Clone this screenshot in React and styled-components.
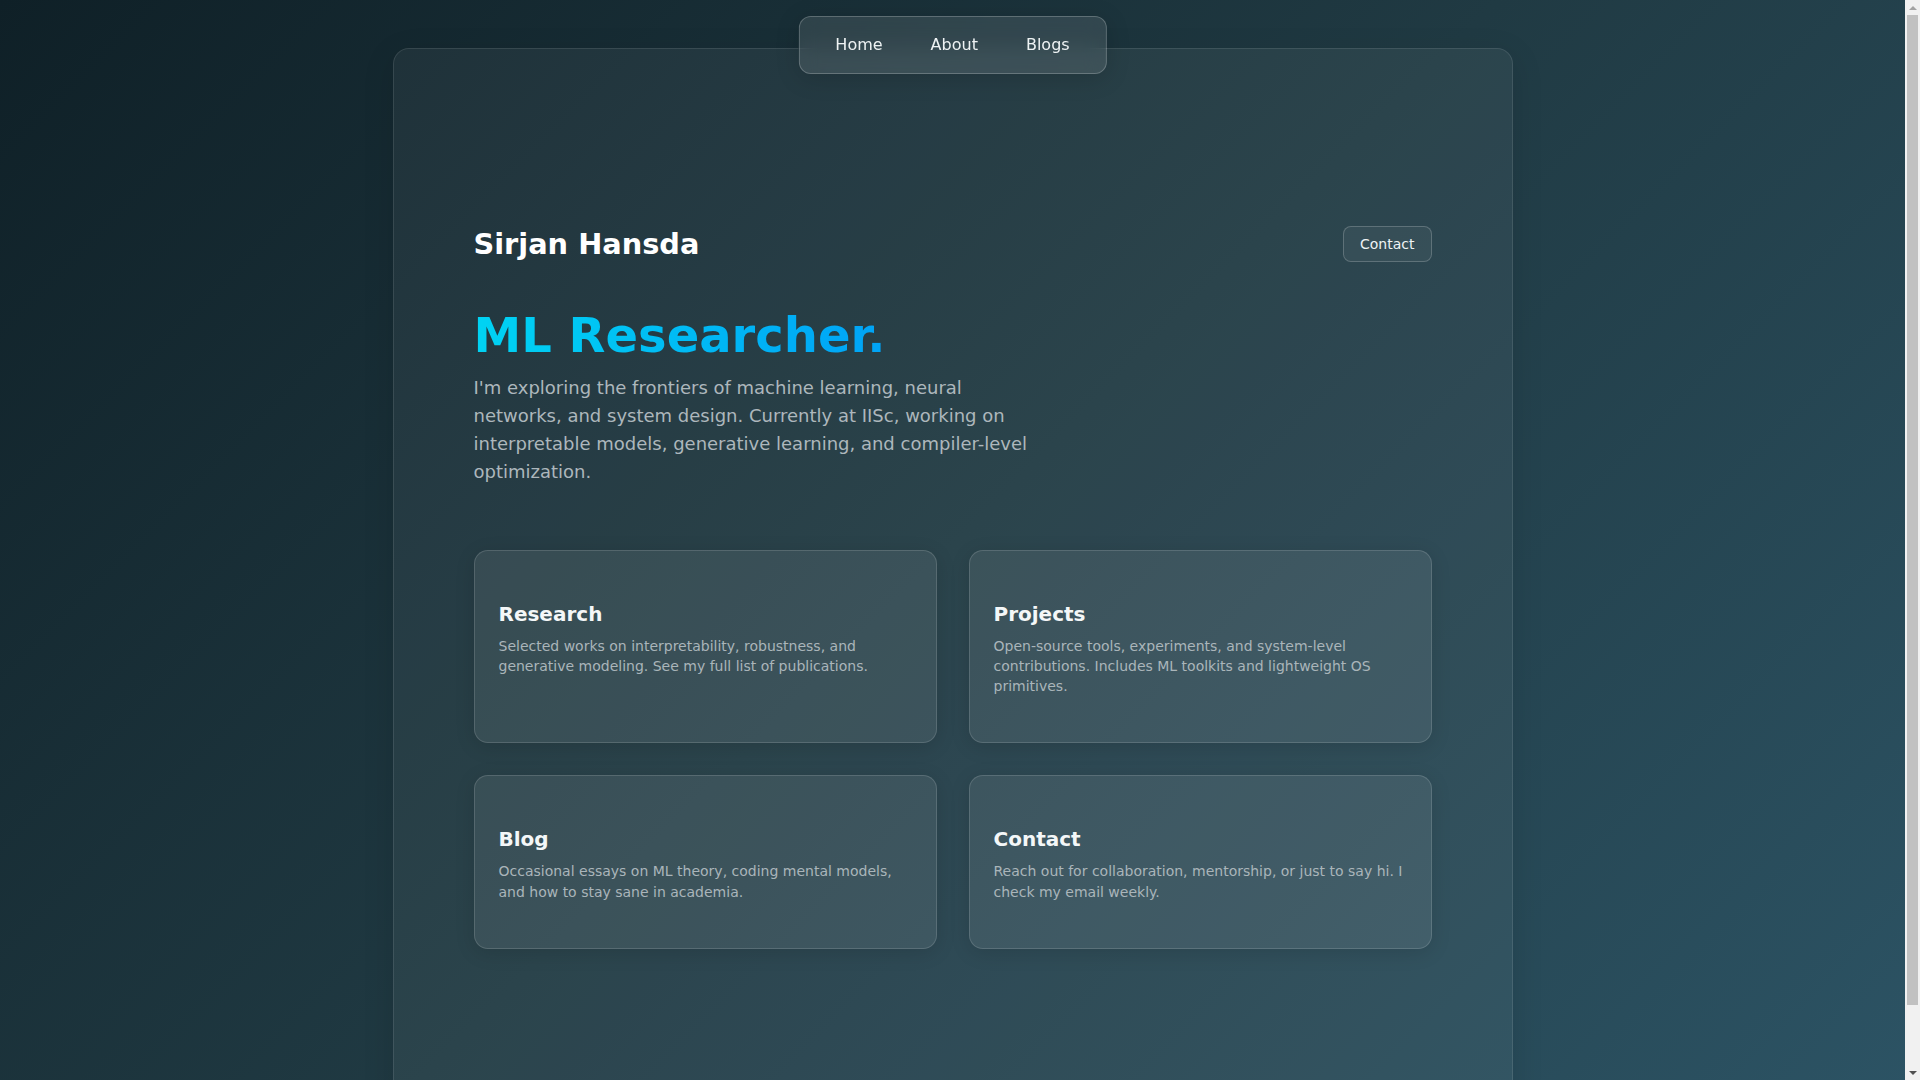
import React from "react";
import styled, { createGlobalStyle } from "styled-components";

const GlobalStyle = createGlobalStyle`
  html, body {
    margin: 0;
    padding: 0;
    height: 100%;
    overflow: hidden;
  }
  html {
    background: linear-gradient(135deg, #0f2027 0%, #203a43 50%, #2c5364 100%);
  }
  body {
    font-family: "DejaVu Sans", "Noto Sans", sans-serif;
    color: #ffffff;
  }
  * { box-sizing: border-box; }
`;

const Viewport = styled.div`
  display: flex;
  height: 100vh;
`;

const Scroller = styled.div`
  flex: 1;
  min-width: 0;
  height: 100vh;
  overflow-y: auto;
  scrollbar-width: none;
  &::-webkit-scrollbar { display: none; }
`;

const ScrollTrack = styled.div`
  width: 15px;
  flex: none;
  display: flex;
  flex-direction: column;
  align-items: center;
  background: #f1f1f1;
`;

const ScrollArrow = styled.div`
  height: 15px;
  width: 15px;
  display: flex;
  align-items: center;
  justify-content: center;
  &::before {
    content: "";
    width: 0;
    height: 0;
    border-left: 4px solid transparent;
    border-right: 4px solid transparent;
    ${(p) =>
      p.$down
        ? `border-top: 4px solid #505050;`
        : `border-bottom: 4px solid #a3a3a3;`}
  }
`;

const ScrollThumb = styled.div`
  width: 11px;
  height: 990px;
  background: #c1c1c1;
`;

const Frame = styled.div`
  position: relative;
  display: flex;
  justify-content: center;
  padding: 48px 0 16px;
`;

const Nav = styled.nav`
  position: absolute;
  top: 16px;
  left: 50%;
  transform: translateX(-50%);
  z-index: 10;
  display: flex;
  align-items: center;
  gap: 8px;
  padding: 10px 16px;
  background: rgba(255, 255, 255, 0.1);
  border: 1px solid rgba(255, 255, 255, 0.22);
  border-radius: 12px;
  backdrop-filter: blur(10px);
  box-shadow: 0 4px 24px rgba(0, 0, 0, 0.15);
`;

const NavLink = styled.a`
  padding: 9px 20px;
  font-size: 16px;
  line-height: 1.1;
  color: #eef3f4;
  text-decoration: none;
  border-radius: 8px;
`;

const Shell = styled.main`
  width: 1120px;
  min-height: 100vh;
  padding: 177px 80px 80px;
  background: rgba(255, 255, 255, 0.05);
  border: 1px solid rgba(255, 255, 255, 0.1);
  border-radius: 16px;
  box-shadow: 0 8px 32px rgba(0, 0, 0, 0.12);
`;

const Header = styled.header`
  display: flex;
  align-items: center;
  justify-content: space-between;
  margin-bottom: 45px;
`;

const Name = styled.h2`
  margin: 0;
  font-size: 28.8px;
  font-weight: 700;
  line-height: 1.2;
  color: #ffffff;
`;

const OutlineButton = styled.button`
  font-family: inherit;
  font-size: 14px;
  line-height: 1.3;
  color: #eef3f4;
  padding: 8px 16px;
  background: rgba(255, 255, 255, 0.05);
  border: 1px solid rgba(255, 255, 255, 0.2);
  border-radius: 8px;
  cursor: pointer;
`;

const Headline = styled.h1`
  width: fit-content;
  margin: 0 0 9px;
  font-size: 48px;
  font-weight: 700;
  line-height: 1.2;
  background: linear-gradient(90deg, #00d3f3 0%, #00a3f6 100%);
  -webkit-background-clip: text;
  background-clip: text;
  color: transparent;
`;

const Lead = styled.p`
  max-width: 560px;
  margin: 0 0 63px;
  font-size: 18px;
  line-height: 1.567;
  color: #adb7bc;
`;

const CardGrid = styled.section`
  display: grid;
  grid-template-columns: repeat(2, 1fr);
  gap: 32px;
`;

const Card = styled.article`
  padding: 51px 24px 46px;
  background: rgba(255, 255, 255, 0.08);
  border: 1px solid rgba(255, 255, 255, 0.14);
  border-radius: 14px;
  box-shadow: 0 4px 20px rgba(0, 0, 0, 0.12);
`;

const CardTitle = styled.h3`
  margin: 0 0 10px;
  font-size: 20px;
  font-weight: 700;
  line-height: 1.2;
  color: #f4f7f8;
`;

const CardText = styled.p`
  margin: 0;
  font-size: 14px;
  line-height: 1.45;
  color: #aab5ba;
`;

const cards = [
  {
    title: "Research",
    text: "Selected works on interpretability, robustness, and generative modeling. See my full list of publications.",
  },
  {
    title: "Projects",
    text: "Open-source tools, experiments, and system-level contributions. Includes ML toolkits and lightweight OS primitives.",
  },
  {
    title: "Blog",
    text: "Occasional essays on ML theory, coding mental models, and how to stay sane in academia.",
  },
  {
    title: "Contact",
    text: "Reach out for collaboration, mentorship, or just to say hi. I check my email weekly.",
  },
];

export default function App() {
  return (
    <>
      <GlobalStyle />
      <Viewport>
        <Scroller>
          <Frame>
            <Nav>
              <NavLink href="#">Home</NavLink>
              <NavLink href="#">About</NavLink>
              <NavLink href="#">Blogs</NavLink>
            </Nav>
            <Shell>
              <Header>
                <Name>Sirjan Hansda</Name>
                <OutlineButton>Contact</OutlineButton>
              </Header>
              <Headline>ML Researcher.</Headline>
              <Lead>
                I'm exploring the frontiers of machine learning, neural networks,
                and system design. Currently at IISc, working on interpretable
                models, generative learning, and compiler-level optimization.
              </Lead>
              <CardGrid>
                {cards.map((c) => (
                  <Card key={c.title}>
                    <CardTitle>{c.title}</CardTitle>
                    <CardText>{c.text}</CardText>
                  </Card>
                ))}
              </CardGrid>
            </Shell>
          </Frame>
        </Scroller>
        <ScrollTrack aria-hidden="true">
          <ScrollArrow />
          <ScrollThumb />
          <div style={{ flex: 1 }} />
          <ScrollArrow $down />
        </ScrollTrack>
      </Viewport>
    </>
  );
}
